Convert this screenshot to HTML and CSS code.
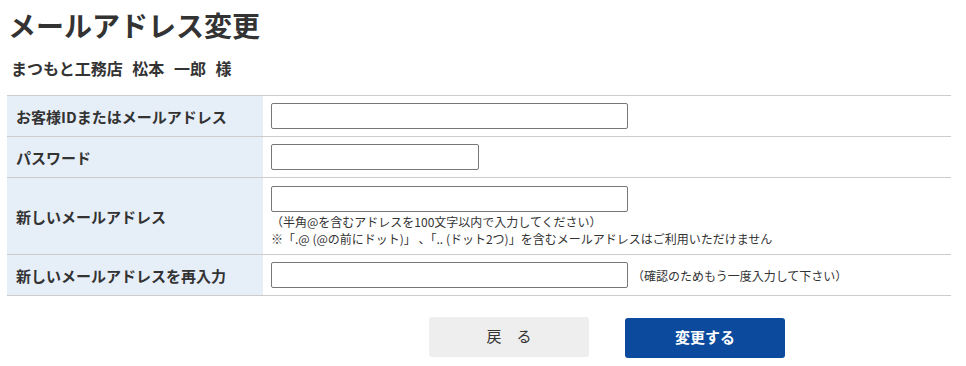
FILE: index.html
```html
<!DOCTYPE html>
<html lang="ja">
<head>
<meta charset="utf-8">
<title>メールアドレス変更</title>
<link rel="stylesheet" href="styles.css">
</head>
<body>
<div class="page">
  <h1 class="title">メールアドレス変更</h1>
  <p class="customer">まつもと工務店 松本 一郎 様</p>
  <div class="form">
    <div class="row row-1">
      <div class="label">お客様IDまたはメールアドレス</div>
      <div class="value"><input class="input input-long" type="text"></div>
    </div>
    <div class="row row-1">
      <div class="label">パスワード</div>
      <div class="value"><input class="input input-short" type="password"></div>
    </div>
    <div class="row row-3">
      <div class="label">新しいメールアドレス</div>
      <div class="value value-stack">
        <input class="input input-long" type="text">
        <p class="note">（半角@を含むアドレスを100文字以内で入力してください）</p>
        <p class="note">※「.@ (@の前にドット)」 、「.. (ドット2つ)」を含むメールアドレスはご利用いただけません</p>
      </div>
    </div>
    <div class="row row-1">
      <div class="label">新しいメールアドレスを再入力</div>
      <div class="value"><input class="input input-long" type="text"><span class="note note-inline">（確認のためもう一度入力して下さい）</span></div>
    </div>
  </div>
  <div class="actions">
    <button class="btn btn-back" type="button">戻　る</button>
    <button class="btn btn-submit" type="button">変更する</button>
  </div>
</div>
</body>
</html>
```

FILE: styles.css
```css
* { box-sizing: border-box; }
body {
  margin: 0;
  background: #fff;
  color: #333;
  font-family: "Noto Sans CJK JP", "Noto Sans", sans-serif;
}
.page {
  width: 944px;
  margin-left: 7px;
  padding-top: 5px;
}
.title {
  margin: 0 0 0 1px;
  font-size: 28px;
  line-height: 40px;
  font-weight: 700;
  color: #333;
}
.customer {
  margin: 11px 0 0 4px;
  font-size: 16px;
  line-height: 24px;
  font-weight: 700;
  word-spacing: 6px;
  color: #333;
}
.form {
  margin-top: 15px;
  border-top: 1px solid #ccc;
}
.row {
  display: flex;
  border-bottom: 1px solid #ccc;
}
.row-1 { height: 41px; }
.row-3 { height: 77px; }
.label {
  width: 256px;
  flex: none;
  background: #e6eef8;
  display: flex;
  align-items: center;
  padding-left: 9px;
  font-size: 15px;
  font-weight: 700;
  color: #333;
}
.value {
  flex: 1;
  display: flex;
  align-items: center;
  padding: 0 8px;
}
.value-stack {
  flex-direction: column;
  align-items: flex-start;
  justify-content: flex-start;
  padding-top: 8px;
}
.input {
  height: 26px;
  border: 1px solid #777;
  border-radius: 2px;
  background: #fff;
  padding: 0 4px;
  font-size: 14px;
}
.input-long { width: 357px; }
.input-short { width: 208px; }
.note {
  margin: 0;
  font-size: 12px;
  line-height: 17px;
  color: #333;
}
.value-stack .input { margin-bottom: 1px; }
.note-inline {
  margin-left: 4px;
}
.actions {
  display: flex;
  gap: 36px;
  margin-top: 21px;
  margin-left: 422px;
}
.btn {
  width: 160px;
  height: 40px;
  border: none;
  border-radius: 3px;
  font-family: "Noto Sans CJK JP", "Noto Sans", sans-serif;
  font-size: 15px;
  padding: 0 0 3px;
}
.btn-back {
  background: #eeeeee;
  color: #333;
}
.btn-submit {
  background: #0b4a9c;
  color: #fff;
  font-weight: 700;
  margin-top: 1px;
}
```
